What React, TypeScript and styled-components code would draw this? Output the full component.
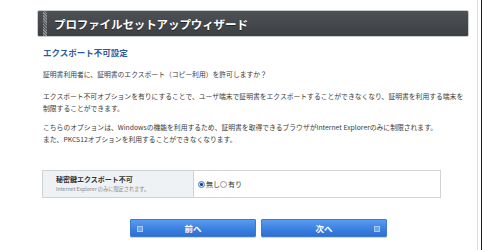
import React, { useState } from "react";
import styled, { createGlobalStyle } from "styled-components";

const GlobalStyle = createGlobalStyle`
  html, body {
    margin: 0;
    padding: 0;
    background: #ffffff;
  }
  body {
    font-family: "Noto Sans CJK JP", "Noto Sans", "Liberation Sans", sans-serif;
    color: #333;
  }
`;

const Page = styled.div`
  width: 482px;
  height: 250px;
  box-sizing: border-box;
  border-right: 1px solid #1a1a1a;
  display: flex;
  overflow: hidden;
`;

const Panel = styled.div`
  width: 478px;
  box-sizing: border-box;
  border-right: 1px solid #dddddd;
  padding: 10px 0 0 37px;
`;

const Content = styled.div`
  width: 432px;
`;

const Header = styled.div`
  height: 27px;
  box-sizing: border-box;
  border: 1px solid #c9cbcc;
  border-radius: 2px;
  background: linear-gradient(#4d5155, #3c4043);
  display: flex;
  align-items: center;
`;

const Stripe = styled.div`
  width: 4px;
  height: 100%;
  margin-left: 5px;
  background: repeating-linear-gradient(45deg, #8a8e91 0 1px, #5a5e61 1px 2px);
`;

const Title = styled.h1`
  margin: 0 0 0 7px;
  font-size: 11.5px;
  line-height: 14px;
  font-weight: 700;
  color: #ffffff;
  letter-spacing: -0.1px;
  text-shadow: 0 1px 0 rgba(0, 0, 0, 0.5);
`;

const Section = styled.div`
  padding-left: 6px;
`;

const Heading = styled.h2`
  margin: 9px 0 0;
  font-size: 8.5px;
  line-height: 12px;
  font-weight: 700;
  color: #2b5aa3;
`;

const Text = styled.p<{ $gap: number }>`
  margin: ${(p) => p.$gap}px 0 0;
  font-size: 6.8px;
  line-height: 12px;
  color: #3a3a3a;
  white-space: nowrap;
`;

const Line = styled.span`
  display: block;
  height: 12px;
  line-height: 12px;
`;

const FormTable = styled.div`
  margin: 25px 0 0 5px;
  width: 399px;
  height: 28px;
  box-sizing: border-box;
  border: 1px solid #cfd3d6;
  display: flex;
`;

const LabelCell = styled.div`
  width: 151px;
  box-sizing: border-box;
  background: #eef2f5;
  border-right: 1px solid #cfd3d6;
  padding: 3px 0 0 13px;
`;

const LabelTitle = styled.div`
  font-size: 7px;
  line-height: 10px;
  height: 10px;
  font-weight: 700;
  color: #333;
`;

const LabelNote = styled.div`
  font-size: 5.2px;
  line-height: 9px;
  height: 9px;
  color: #888;
`;

const ValueCell = styled.div`
  flex: 1;
  display: flex;
  align-items: center;
  padding-left: 4px;
`;

const Choice = styled.label`
  display: flex;
  align-items: center;
  font-size: 7px;
  color: #333;
  cursor: pointer;
`;

const Radio = styled.span<{ $on: boolean }>`
  width: 7px;
  height: 7px;
  box-sizing: border-box;
  border-radius: 50%;
  border: 1px solid ${(p) => (p.$on ? "#3b7fd9" : "#9a9a9a")};
  background: ${(p) =>
    p.$on ? "radial-gradient(circle, #1d3f6e 0 1.3px, #cfe2fb 1.6px)" : "#fff"};
  margin-right: 1px;
`;

const Buttons = styled.div`
  display: flex;
  gap: 5px;
  margin: 21px 0 0 93px;
`;

const Btn = styled.button<{ $side: "left" | "right" }>`
  position: relative;
  width: 126px;
  height: 18px;
  border: 1px solid #3a78d2;
  border-radius: 1px;
  background: linear-gradient(#5a9cf0, #3a7ee0 60%, #2f6fcf);
  color: #ffffff;
  font-family: inherit;
  font-size: 8.5px;
  font-weight: 700;
  line-height: 16px;
  padding: 0;
  cursor: pointer;
  box-shadow: 0 1px 0 rgba(0, 0, 0, 0.15);

  &::before {
    content: "";
    position: absolute;
    top: 6px;
    ${(p) => (p.$side === "left" ? "left: 6px;" : "right: 6px;")}
    width: 4px;
    height: 4px;
    border: 1px solid #a9c8f2;
    background: #6ea4ea;
  }
`;

export default function App() {
  const [deny, setDeny] = useState(false);

  return (
    <>
      <GlobalStyle />
      <Page>
        <Panel>
          <Content>
            <Header>
              <Stripe />
              <Title>プロファイルセットアップウィザード</Title>
            </Header>
            <Section>
              <Heading>エクスポート不可設定</Heading>
              <Text $gap={10}>
                <Line>証明書利用者に、証明書のエクスポート（コピー利用）を許可しますか？</Line>
              </Text>
              <Text $gap={10}>
                <Line>
                  エクスポート不可オプションを有りにすることで、ユーザ端末で証明書をエクスポートすることができなくなり、証明書を利用する端末を
                </Line>
                <Line>制限することができます。</Line>
              </Text>
              <Text $gap={7}>
                <Line>
                  こちらのオプションは、Windowsの機能を利用するため、証明書を取得できるブラウザがInternet Explorerのみに制限されます。
                </Line>
                <Line>また、PKCS12オプションを利用することができなくなります。</Line>
              </Text>
            </Section>
            <FormTable>
              <LabelCell>
                <LabelTitle>秘密鍵エクスポート不可</LabelTitle>
                <LabelNote>Internet Explorer のみに限定されます。</LabelNote>
              </LabelCell>
              <ValueCell>
                <Choice onClick={() => setDeny(false)}>
                  <Radio $on={!deny} />
                  無し
                </Choice>
                <Choice onClick={() => setDeny(true)}>
                  <Radio $on={deny} />
                  有り
                </Choice>
              </ValueCell>
            </FormTable>
            <Buttons>
              <Btn $side="left">前へ</Btn>
              <Btn $side="right">次へ</Btn>
            </Buttons>
          </Content>
        </Panel>
      </Page>
    </>
  );
}
